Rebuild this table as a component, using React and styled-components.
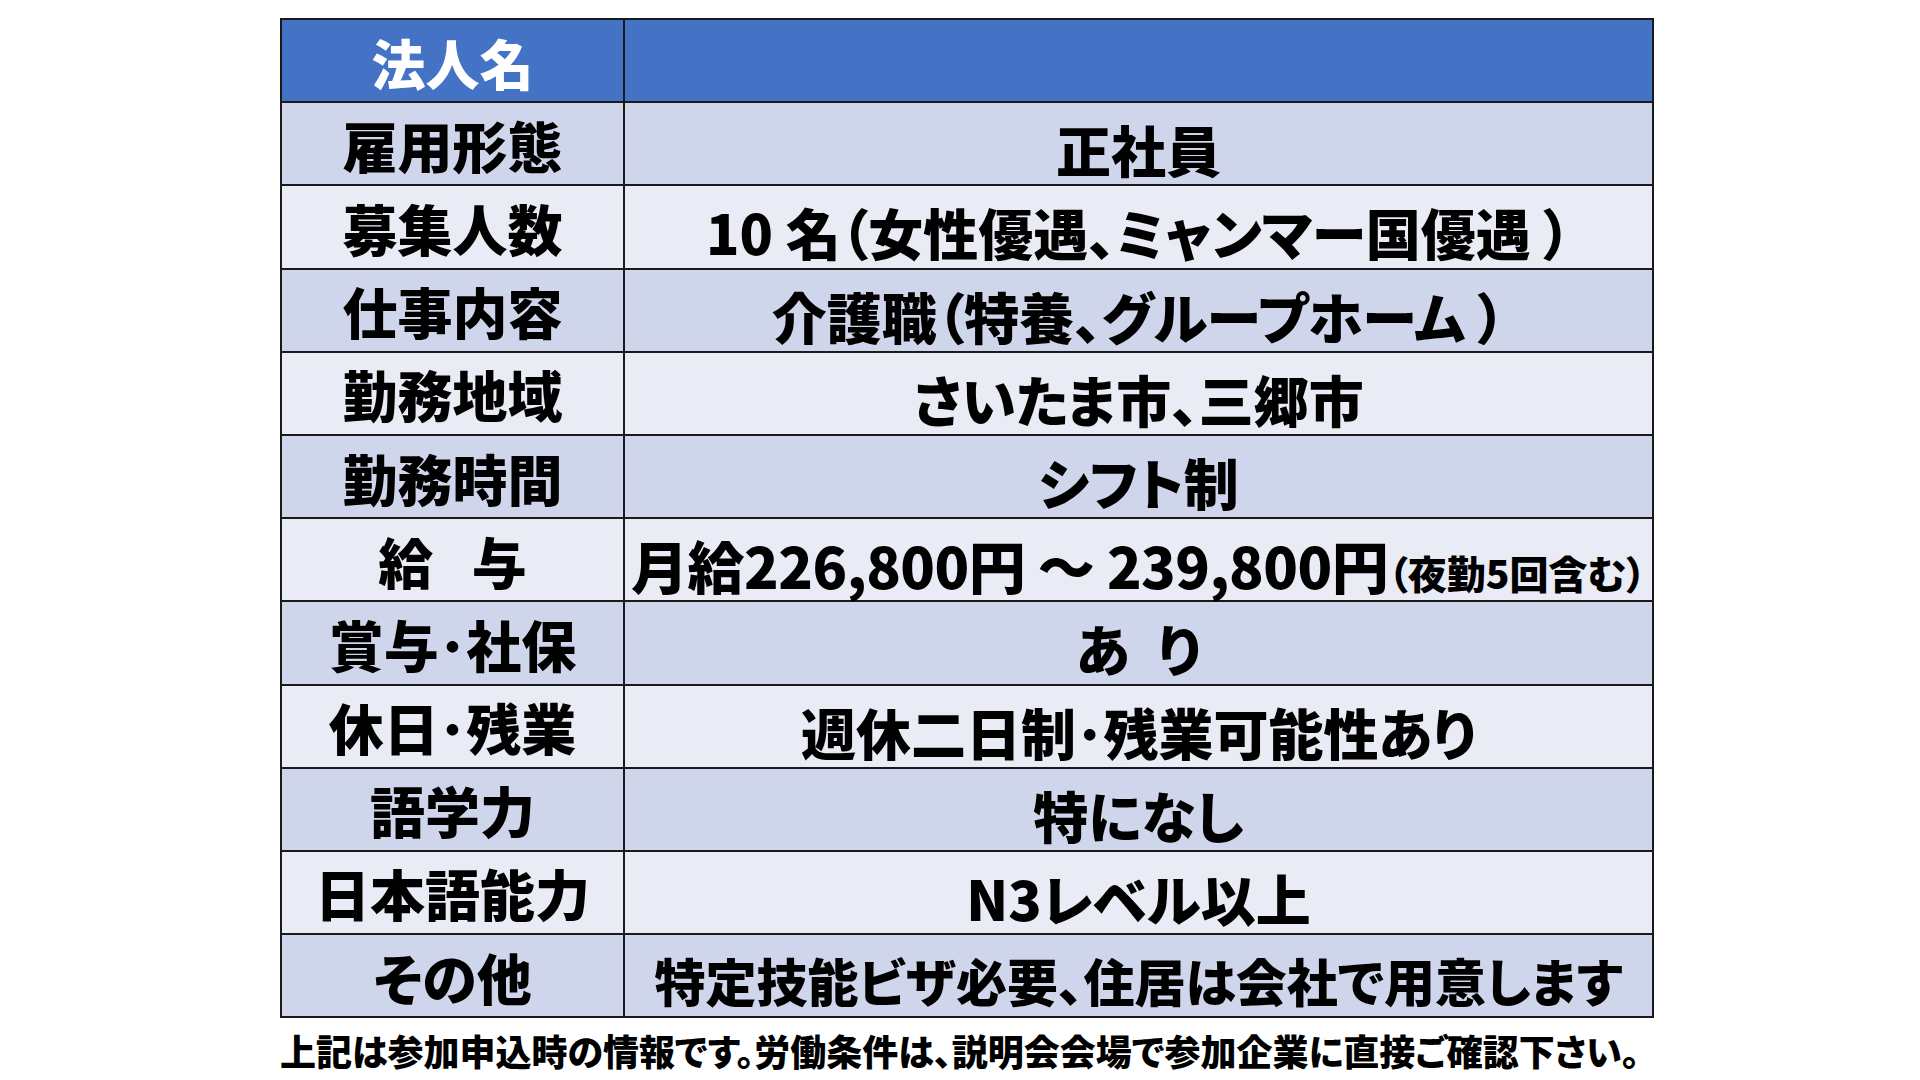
import React from "react";
import styled, { createGlobalStyle } from "styled-components";

const rows = [
  { label: "雇用形態", value: "正社員" },
  { label: "募集人数", value: "10 名（女性優遇、ミャンマー国優遇 ）" },
  { label: "仕事内容", value: "介護職（特養、グループホーム ）" },
  { label: "勤務地域", value: "さいたま市、三郷市" },
  { label: "勤務時間", value: "シフト制" },
  { label: "給\u2002\u2009与", salary: true },
  { label: "賞与･社保", value: "あ\u2002り" },
  { label: "休日･残業", value: "週休二日制･残業可能性あり" },
  { label: "語学力", value: "特になし" },
  { label: "日本語能力", value: "N3レベル以上" },
  { label: "その他", value: "特定技能ビザ必要、住居は会社で用意します", size: 51 },
];

export default function App() {
  return (
    <>
      <GlobalStyle />
      <StyledPage>
        <StyledTable>
          <colgroup>
            <col style={{ width: 343 }} />
            <col style={{ width: 1029 }} />
          </colgroup>
          <thead>
            <StyledRow>
              <StyledHead>法人名</StyledHead>
              <StyledHead />
            </StyledRow>
          </thead>
          <tbody>
            {rows.map((row, i) => (
              <StyledRow key={row.label}>
                <StyledLabel $dark={i % 2 === 0}>{row.label}</StyledLabel>
                <StyledValue $dark={i % 2 === 0} $size={row.size}>
                  {row.salary ? (
                    <StyledSalary>
                      月給226,800円 ～ 239,800円<small>（夜勤5回含む）</small>
                    </StyledSalary>
                  ) : (
                    row.value
                  )}
                </StyledValue>
              </StyledRow>
            ))}
          </tbody>
        </StyledTable>
        <StyledNote>
          上記は参加申込時の情報です。労働条件は、説明会会場で参加企業に直接ご確認下さい。
        </StyledNote>
      </StyledPage>
    </>
  );
}

const GlobalStyle = createGlobalStyle`
  html, body {
    margin: 0;
    background: #fff;
    font-family: "Noto Sans CJK JP", "Noto Sans", sans-serif;
  }
`;

const StyledPage = styled.div`
  width: 1920px;
  height: 1080px;
  padding: 18px 0 0 280px;
  box-sizing: border-box;
  overflow: hidden;
`;

const StyledTable = styled.table`
  width: 1372px;
  border-collapse: collapse;
  table-layout: fixed;
  border: 2px solid #1a1a1a;
`;

const StyledRow = styled.tr`
  height: 83.2px;
`;

const StyledHead = styled.th`
  padding: 4px 0 0;
  background: #4472c4;
  color: #fff;
  border: 2px solid #1a1a1a;
  font-size: 54px;
  font-weight: 900;
  text-align: center;
  line-height: 1;
`;

const StyledCell = styled.td`
  padding: 0;
  border: 2px solid #1a1a1a;
  background: ${(p) => (p.$dark ? "#cfd5ea" : "#e9ebf5")};
  color: #000;
  font-size: ${(p) => p.$size || 55}px;
  font-weight: 900;
  text-align: center;
  line-height: 1;
  white-space: nowrap;
  font-feature-settings: "palt";
`;

const StyledLabel = styled(StyledCell)`
  padding-top: 1px;
`;

const StyledValue = styled(StyledCell)`
  padding-top: 10px;
`;

const StyledSalary = styled.span`
  font-size: 57px;
  letter-spacing: -0.5px;
  small {
    font-size: 39px;
    letter-spacing: 0;
  }
`;

const StyledNote = styled.div`
  margin-top: 14px;
  font-size: 36px;
  font-weight: 900;
  color: #000;
  line-height: 1;
  white-space: nowrap;
  font-feature-settings: "palt";
`;
